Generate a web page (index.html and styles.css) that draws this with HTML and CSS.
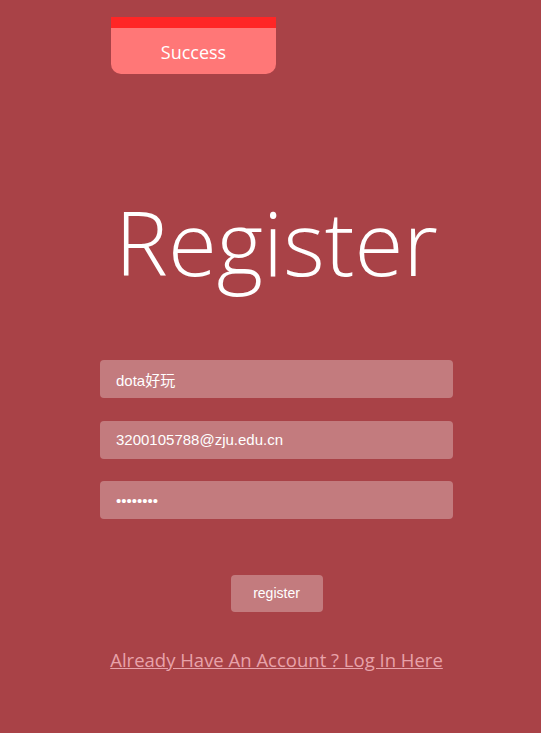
FILE: index.html
```html
<!DOCTYPE html>
<html>
<head>
<meta charset="utf-8">
<link rel="stylesheet" href="styles.css">
</head>
<body>
<div class="toast">
  <div class="toast-bar"></div>
  <div class="toast-text">Success</div>
</div>
<main class="page">
  <h1 class="title">Register</h1>
  <form class="form">
    <input class="field" type="text" value="dota好玩">
    <input class="field" type="text" value="3200105788@zju.edu.cn">
    <input class="field" type="password" value="12345678">
    <button class="btn" type="button">register</button>
  </form>
  <a class="link" href="#">Already Have An Account ? Log In Here</a>
</main>
</body>
</html>
```
FILE: styles.css
```css
html, body {
  margin: 0;
  padding: 0;
  height: 100%;
}
body {
  background: #a94247;
  font-family: "Liberation Sans", Arial, sans-serif;
  color: #fff;
  overflow: hidden;
}
.toast {
  position: absolute;
  left: 111px;
  top: 17px;
  width: 165px;
  height: 57px;
  background: #ff7777;
  border-radius: 0 0 10px 10px;
  overflow: hidden;
}
.toast-bar {
  height: 11px;
  background: #ff2626;
}
.toast-text {
  text-align: center;
  font-family: "Open Sans", "Noto Sans", sans-serif;
  font-size: 18px;
  line-height: 24px;
  padding-top: 12px;
  color: #fff;
}
.page {
  width: 353px;
  margin-left: 100px;
  display: flex;
  flex-direction: column;
  align-items: center;
  padding-top: 177px;
}
.title {
  margin: 0;
  font-family: "Open Sans", "Noto Sans", sans-serif;
  font-weight: 300;
  font-size: 89px;
  line-height: 130px;
}
.form {
  width: 100%;
  display: flex;
  flex-direction: column;
  align-items: center;
  margin-top: 53px;
}
.field {
  box-sizing: border-box;
  width: 100%;
  height: 38px;
  margin-bottom: 22.5px;
  border: none;
  outline: none;
  border-radius: 4px;
  background: rgba(255,255,255,0.3);
  color: #fff;
  font-family: "Liberation Sans", "Noto Sans CJK SC", Arial, sans-serif;
  font-size: 15px;
  padding: 0 16px;
}
.btn {
  margin-top: 33px;
  width: 92px;
  height: 37px;
  border: none;
  border-radius: 4px;
  background: rgba(255,255,255,0.3);
  color: #fff;
  font-family: "Liberation Sans", Arial, sans-serif;
  font-size: 14px;
}
.link {
  margin-top: 35px;
  color: #e8a2aa;
  font-family: "Open Sans", "Noto Sans", sans-serif;
  font-size: 18.5px;
  text-decoration: underline;
}
```
